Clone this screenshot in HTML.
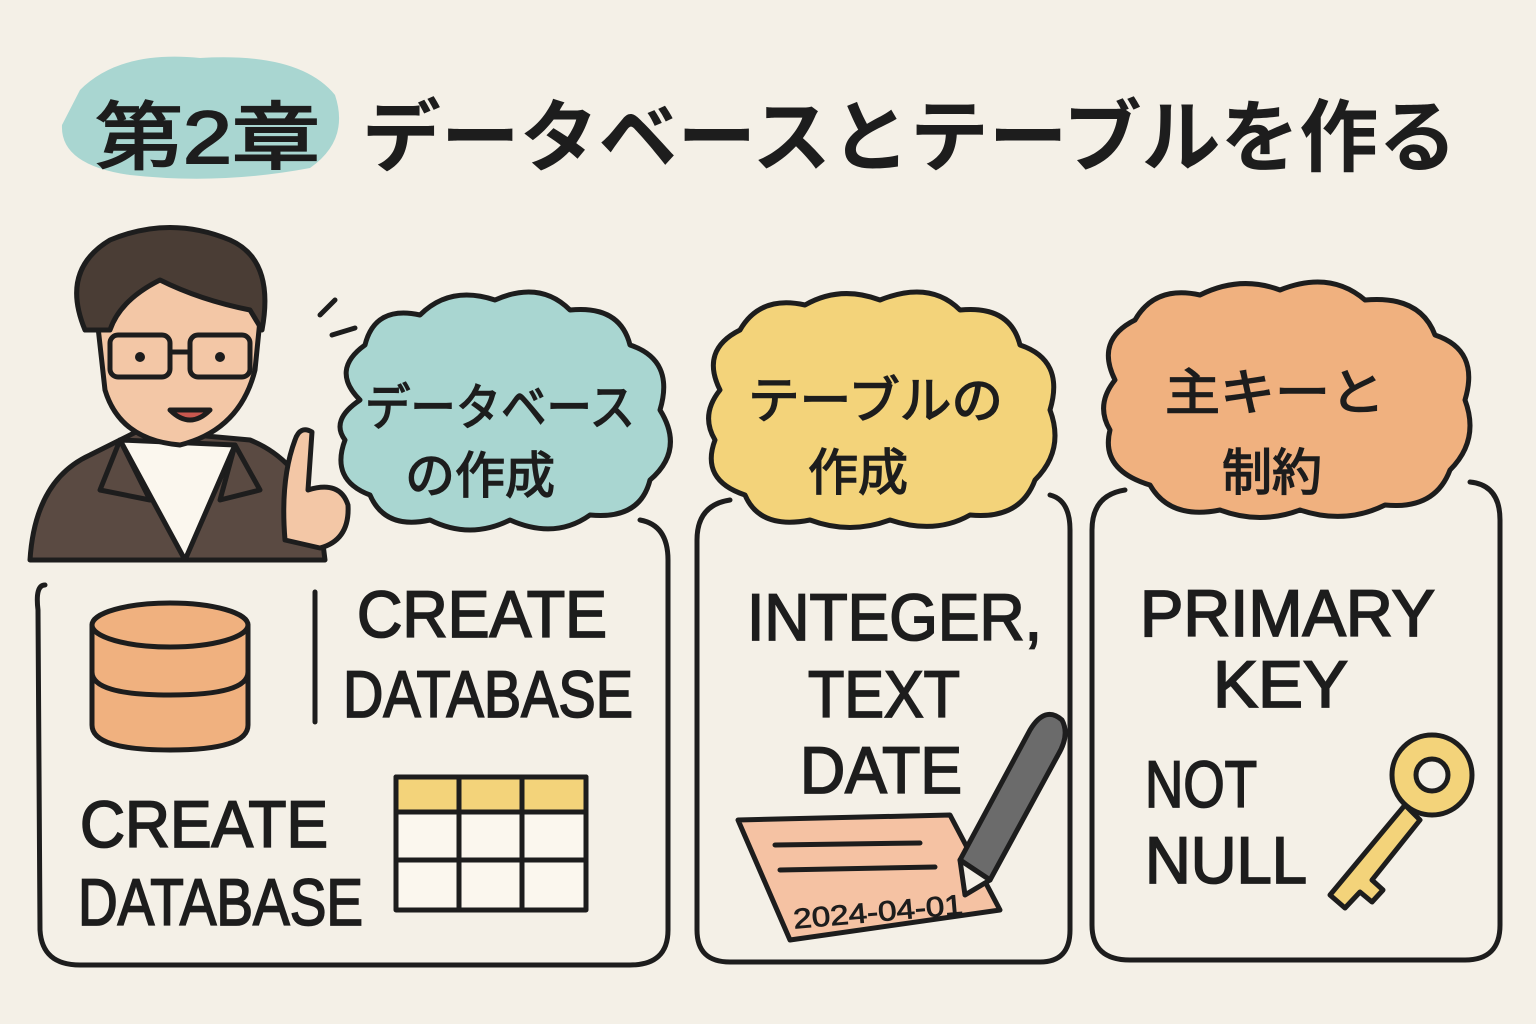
<!DOCTYPE html>
<html><head><meta charset="utf-8"><style>
html,body{margin:0;padding:0;background:#f4f0e7;}
svg{display:block}
.j{font-family:"Liberation Sans","Noto Sans CJK JP",sans-serif;font-weight:700;fill:#1d1d1d}
.m{font-family:"Liberation Sans Narrow","Liberation Sans",sans-serif;fill:#1d1d1d}
</style></head><body>
<svg width="1536" height="1024" viewBox="0 0 1536 1024" xmlns="http://www.w3.org/2000/svg">
<rect width="1536" height="1024" fill="#f4f0e7"/>
<path d="M80 90 Q120 50 200 58 Q300 52 335 95 Q350 140 310 168 Q220 185 130 175 Q60 165 62 125 Z" fill="#a9d6d1"/>
<text x="95" y="163" class="j" font-size="74" textLength="225" lengthAdjust="spacingAndGlyphs" style="font-weight:400" stroke="#1d1d1d" stroke-width="2">第2章</text>
<text x="362" y="165" class="j" font-size="79" textLength="1095" lengthAdjust="spacingAndGlyphs">データベースとテーブルを作る</text>

<g stroke="#1d1d1d" stroke-width="5" fill="none" stroke-linecap="round" stroke-linejoin="round">
<path d="M45 585 Q35 585 38 610 L40 930 Q42 965 80 965 L630 965 Q668 965 668 930 L668 560 Q668 525 640 520"/>
<path d="M730 500 Q697 505 697 540 L697 930 Q697 962 730 962 L1040 962 Q1070 962 1070 930 L1070 530 Q1070 500 1050 495"/>
<path d="M1125 490 Q1092 495 1092 530 L1092 925 Q1092 960 1130 960 L1465 960 Q1500 960 1500 925 L1500 520 Q1500 485 1470 482"/>
<path d="M360 400 Q330 370 365 345 Q375 305 420 315 Q450 285 495 300 Q540 280 570 310 Q620 305 630 345 Q675 360 660 410 Q685 450 650 480 Q640 520 590 515 Q555 540 510 520 Q470 540 430 520 Q385 530 370 495 Q330 480 345 440 Q330 420 360 400 Z" fill="#a9d6d1"/>
<path d="M720 390 Q700 350 740 330 Q760 295 805 305 Q840 285 880 300 Q930 280 960 310 Q1010 305 1020 345 Q1065 360 1050 410 Q1065 450 1035 480 Q1020 520 970 515 Q935 535 890 520 Q850 535 810 520 Q760 530 745 495 Q700 480 715 440 Q700 415 720 390 Z" fill="#f3d37a"/>
<path d="M1115 380 Q1095 340 1135 320 Q1155 285 1200 295 Q1240 275 1280 290 Q1330 270 1365 300 Q1420 295 1435 335 Q1480 350 1465 400 Q1480 440 1450 470 Q1435 510 1385 505 Q1345 525 1300 510 Q1260 525 1220 510 Q1170 520 1150 485 Q1100 470 1110 430 Q1095 405 1115 380 Z" fill="#f0b17f"/>
<path d="M92 625 L92 725 Q92 750 170 750 Q248 750 248 725 L248 625" fill="#f0b17f"/>
<ellipse cx="170" cy="625" rx="78" ry="22" fill="#f0b17f"/>
<path d="M92 672 Q92 695 170 695 Q248 695 248 672"/>
<line x1="315" y1="592" x2="315" y2="722"/>
<rect x="396" y="777" width="190" height="133" fill="#fbf7ee"/>
<rect x="396" y="777" width="190" height="35" fill="#f3d37a"/>
<line x1="396" y1="812" x2="586" y2="812"/><line x1="396" y1="860" x2="586" y2="860"/>
<line x1="459" y1="777" x2="459" y2="910"/><line x1="522" y1="777" x2="522" y2="910"/>
<path d="M738 820 L950 815 L1000 910 L790 940 Z" fill="#f5c2a3"/>
<line x1="775" y1="845" x2="920" y2="843"/><line x1="780" y1="870" x2="935" y2="867"/>
<path d="M960 860 L1030 730 Q1045 705 1062 720 Q1070 735 1058 755 L990 880 Z" fill="#6b6b6b"/>
<path d="M960 860 L990 880 L965 895 Z" fill="#f4f0e7"/>
<circle cx="1432" cy="775" r="40" fill="#f3d37a"/>
<circle cx="1432" cy="775" r="16" fill="#f4f0e7"/>
<path d="M1405 805 L1330 895 L1345 908 L1360 892 L1372 902 L1383 890 L1372 880 L1420 820 Z" fill="#f3d37a"/>
<!-- person -->
<path d="M30 560 Q35 480 90 455 L140 430 L250 440 Q300 460 320 520 L325 560 Z" fill="#5a4a42"/>
<path d="M120 440 L185 560 L235 445 Z" fill="#fbf7ee"/>
<path d="M120 440 L100 490 L150 500 Z M235 445 L260 490 L220 500 Z" fill="#5a4a42"/>
<path d="M95 300 Q80 260 120 245 Q170 225 220 245 Q265 265 260 320 L255 370 Q240 430 180 445 Q120 440 105 390 Z" fill="#f3c7a6"/>
<path d="M85 330 Q60 270 110 240 Q170 215 230 240 Q275 260 262 330 L250 310 Q200 300 160 280 Q120 300 110 330 Z" fill="#4a3d35"/>
<rect x="110" y="335" width="60" height="42" rx="8"/><rect x="190" y="335" width="60" height="42" rx="8"/>
<line x1="170" y1="352" x2="190" y2="352"/>
<path d="M170 410 Q190 430 210 410 Z" fill="#c9584f"/>
<path d="M285 540 Q280 480 295 440 Q300 425 312 432 L308 490 Q340 480 348 505 Q350 540 320 548 Z" fill="#f3c7a6"/>
<line x1="320" y1="315" x2="335" y2="300"/><line x1="332" y1="335" x2="355" y2="328"/>
</g>
<circle cx="140" cy="357" r="5" fill="#1d1d1d"/><circle cx="220" cy="357" r="5" fill="#1d1d1d"/>
<g style="font-weight:400" stroke="#1d1d1d" stroke-width="1.5">
<text x="365" y="425" class="j" font-size="50" style="font-weight:400" textLength="270" lengthAdjust="spacingAndGlyphs">データベース</text>
<text x="405" y="493" class="j" font-size="50" style="font-weight:400">の作成</text>
<text x="748" y="418" class="j" font-size="50" style="font-weight:400" textLength="255" lengthAdjust="spacingAndGlyphs">テーブルの</text>
<text x="808" y="490" class="j" font-size="50" style="font-weight:400">作成</text>
<text x="1165" y="410" class="j" font-size="50" style="font-weight:400" textLength="220" lengthAdjust="spacingAndGlyphs">主キーと</text>
<text x="1222" y="490" class="j" font-size="50" style="font-weight:400">制約</text>
</g>
<g class="m" font-size="66" stroke="#1d1d1d" stroke-width="1.8">
<text x="357" y="637" textLength="250" lengthAdjust="spacingAndGlyphs">CREATE</text>
<text x="343" y="717" textLength="290" lengthAdjust="spacingAndGlyphs">DATABASE</text>
<text x="80" y="847" textLength="248" lengthAdjust="spacingAndGlyphs">CREATE</text>
<text x="78" y="925" textLength="285" lengthAdjust="spacingAndGlyphs">DATABASE</text>
<text x="747" y="640" textLength="295" lengthAdjust="spacingAndGlyphs">INTEGER,</text>
<text x="808" y="717" textLength="152" lengthAdjust="spacingAndGlyphs">TEXT</text>
<text x="800" y="793" textLength="162" lengthAdjust="spacingAndGlyphs">DATE</text>
<text x="1140" y="636" textLength="295" lengthAdjust="spacingAndGlyphs">PRIMARY</text>
<text x="1213" y="707" textLength="135" lengthAdjust="spacingAndGlyphs">KEY</text>
<text x="1145" y="807" textLength="112" lengthAdjust="spacingAndGlyphs">NOT</text>
<text x="1145" y="883" textLength="162" lengthAdjust="spacingAndGlyphs">NULL</text>
</g>
<text x="793" y="922" class="m" font-size="28" stroke="#1d1d1d" stroke-width="0.8" textLength="170" lengthAdjust="spacingAndGlyphs" transform="rotate(-5 870 912)">2024-04-01</text>
</svg>
</body></html>
